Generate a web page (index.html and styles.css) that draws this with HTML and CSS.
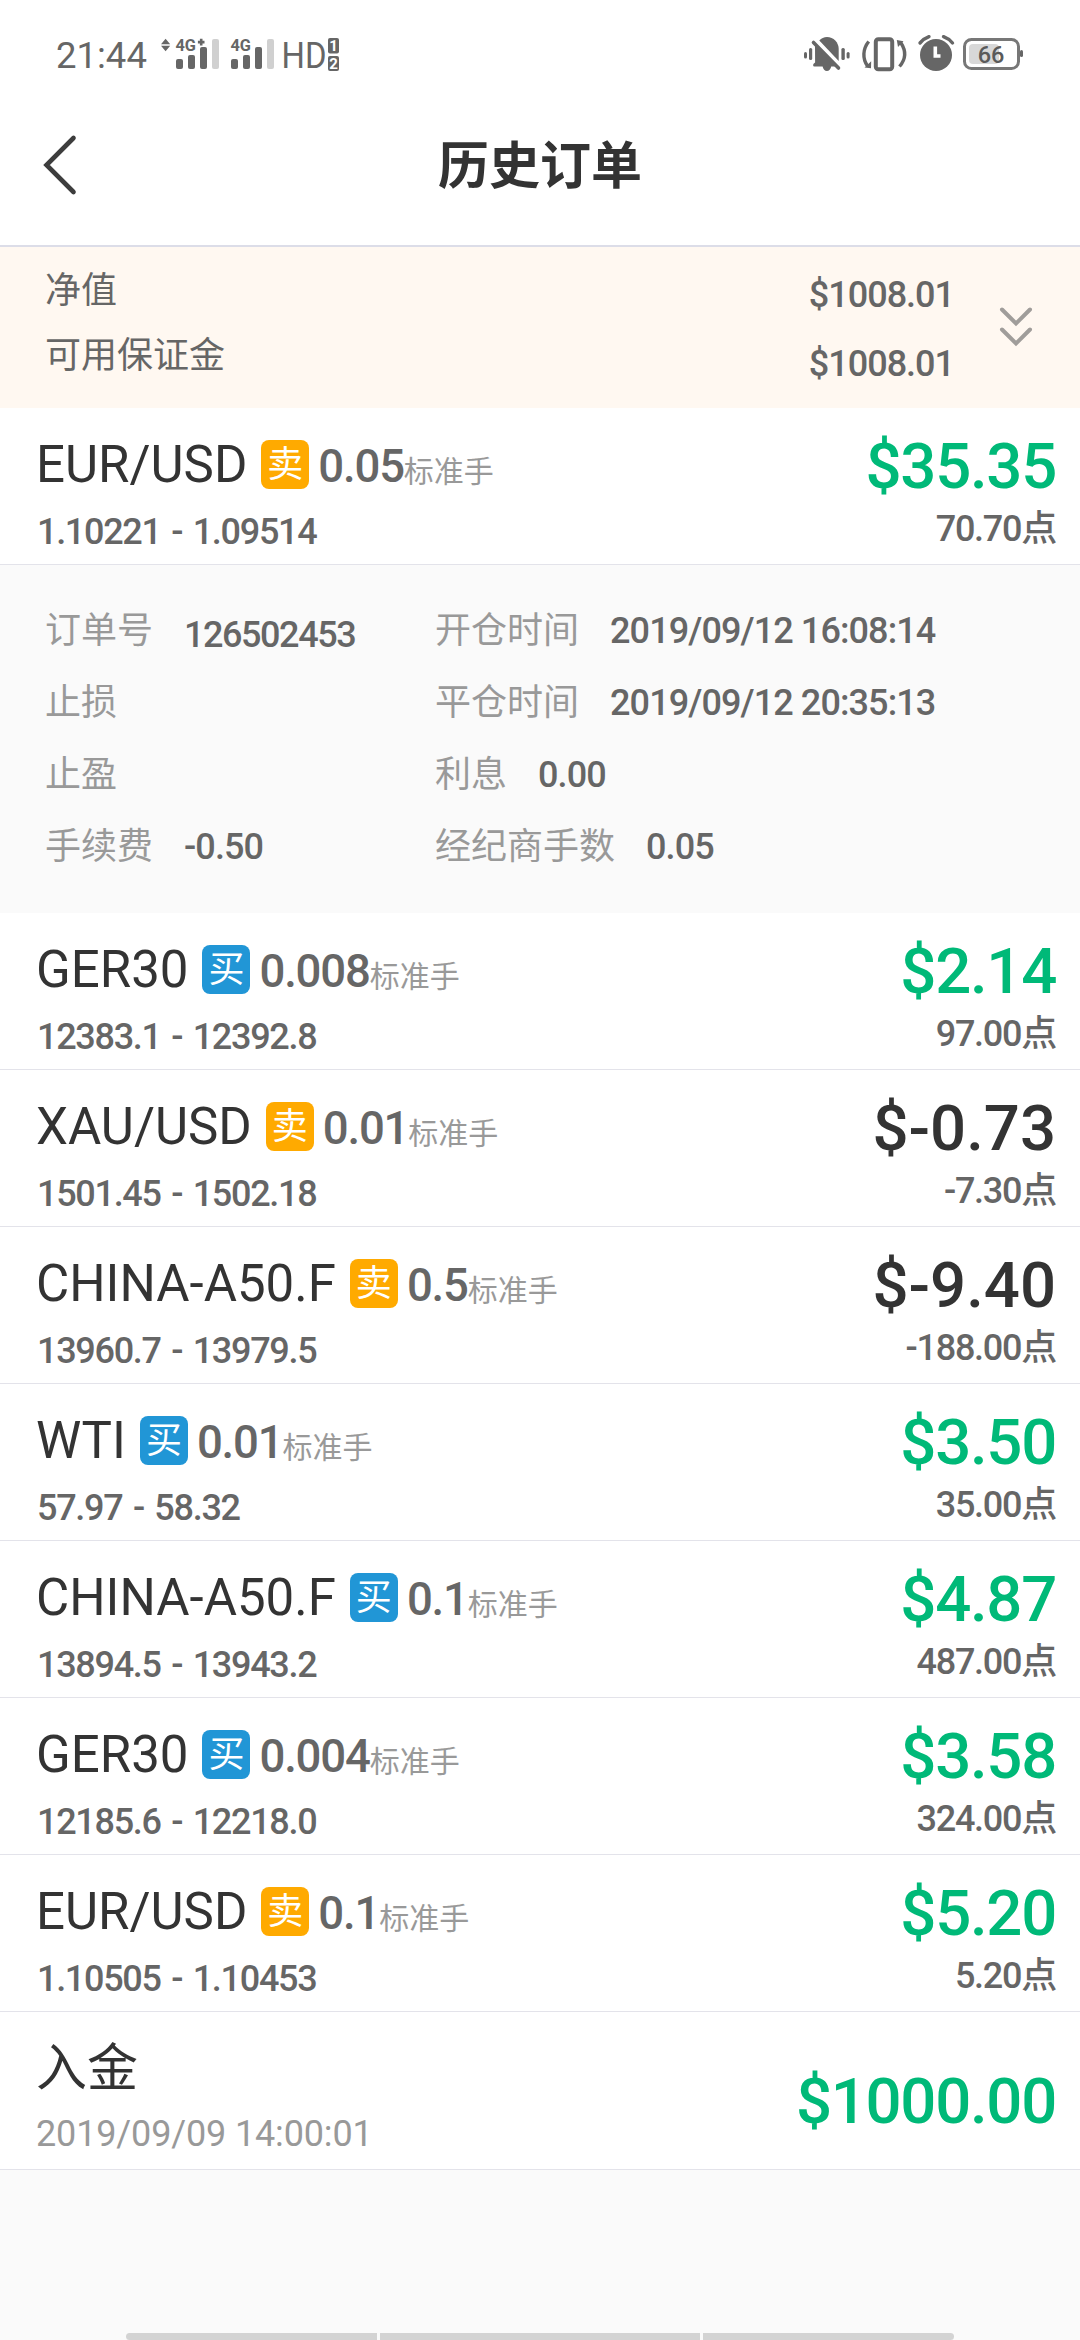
FILE: index.html
```html
<!DOCTYPE html>
<html lang="zh-CN">
<head>
<meta charset="utf-8">
<title>历史订单</title>
<link rel="stylesheet" href="styles.css">
</head>
<body>
<div class="screen">
  <header class="top">
    <div class="status">
      <span class="clock">21:44</span>
      <svg class="status-left" viewBox="156 30 190 50" width="190" height="50">
        <g fill="#666">
          <path d="M161 44.2l4.6-5.4 4.6 5.4zM161 45.8l4.6 5.4 4.6-5.4z"/>
          <path d="M199.9 38.800h2.600v2h2v2.800h-2v2h-2.600v-2h-2v-2.800h2z"/>
          <rect x="176" y="59" width="7" height="10" rx="2"/><rect x="188" y="55" width="7" height="14" rx="2"/><rect x="200" y="47" width="7" height="22" rx="2"/>
          <rect x="231" y="59" width="7" height="10" rx="2"/><rect x="243" y="55" width="7" height="14" rx="2"/><rect x="255" y="47" width="7" height="22" rx="2"/>
          <rect x="328" y="38" width="11" height="15.400" rx="2"/><rect x="328" y="56" width="11" height="15" rx="2"/>
          <text class="net" x="175.500" y="51" textLength="20.500" lengthAdjust="spacingAndGlyphs">4G</text>
          <text class="net" x="230.500" y="51" textLength="20.500" lengthAdjust="spacingAndGlyphs">4G</text>
          <text class="hd" x="281.500" y="67.500" textLength="45" lengthAdjust="spacingAndGlyphs">HD</text>
        </g>
        <rect x="212" y="39" width="7" height="30" rx="2" fill="#d0d0d0"/>
        <rect x="267" y="39" width="7" height="30" rx="2" fill="#d0d0d0"/>
        <text class="sim" x="333.500" y="50.500">1</text><text class="sim" x="333.500" y="68.500">2</text>
      </svg>
      <svg class="status-right" viewBox="800 30 228 50" width="228" height="50">
        <g fill="#666">
          <rect x="804" y="52" width="3" height="6.500" rx="1.500"/><rect x="809" y="48" width="3.200" height="12" rx="1.500"/>
          <rect x="841.400" y="48" width="3.400" height="12" rx="1.500"/><rect x="846.600" y="52" width="3" height="6.500" rx="1.500"/>
          <path d="M819.300 40.500c2-2.200 4.700-3.500 7.700-3.500 6.500 0 11.700 5.500 11.700 12v12z"/>
          <path d="M815 45l20.500 21.500h-4.300c-.5 2.700-2.200 4.500-4.300 4.500s-3.800-1.800-4.300-4.500h-8.200q-1.300 0-1.300-1.500t2-2.500z"/>
          <path d="M813.500 42.500l25 25.500" stroke="#666" stroke-width="3.600" stroke-linecap="round"/>
          <path d="M864.500 67.500l6.500.7.200-7zM896.800 40l6.700 1.200-5.500 5.800z"/>
          <circle cx="936" cy="55" r="16"/>
          <rect x="1020" y="50" width="3" height="7" rx="1.500"/>
        </g>
        <g fill="none" stroke="#666" stroke-width="3.400">
          <rect x="875.800" y="39.200" width="16.400" height="30" rx="2.500" stroke-width="4"/>
          <path d="M868.700 41.500c-6 7.500-6.400 17-1.200 24.500M901 43c5.200 8 4.600 16.500-1.500 23.500"/>
          <path d="M920 43q4-4.500 9-6.300M943.500 36.700q5.500 2 9 6.300" stroke-linecap="round"/>
        </g>
        <path d="M935.300 46.500v9.500h5.200" fill="none" stroke="#fff" stroke-width="3.600"/>
        <rect x="969" y="44" width="30" height="20" rx="4" fill="#d8d8d8"/>
        <rect x="964.500" y="39.500" width="54" height="29" rx="7" fill="none" stroke="#777" stroke-width="3"/>
        <text class="charge" x="991" y="62.700">66</text>
      </svg>
    </div>
    <div class="nav">
      <svg class="back" viewBox="0 0 36 62" width="36" height="62"><path d="M31.500 4L4.500 31l27 27" fill="none" stroke="#3d3d3d" stroke-width="4.600" stroke-linecap="round"/></svg>
      <h1 class="title">历史订单</h1>
    </div>
  </header>

  <section class="account">
    <div class="account-labels"><div>净值</div><div>可用保证金</div></div>
    <div class="account-values num"><div>$1008.01</div><div>$1008.01</div></div>
    <svg class="expand" viewBox="0 0 34 42" width="34" height="42"><path d="M3 4.500l14 14 14-14M3 24.500l14 14 14-14" fill="none" stroke="#a09d9a" stroke-width="4" stroke-linecap="round"/></svg>
  </section>

  <main>
    <article class="order">
      <div class="order-main">
        <div class="headline"><span class="symbol">EUR/USD</span><span class="side sell">卖</span><span class="lots num">0.05</span><span class="unit">标准手</span></div>
        <div class="prices num">1.10221 - 1.09514</div>
      </div>
      <div class="result"><div class="amount num gain">$35.35</div><div class="points num">70.70点</div></div>
    </article>
    <section class="details">
      <div class="field"><span class="label">订单号</span><span class="value num order-id">126502453</span></div>
      <div class="field"><span class="label">开仓时间</span><span class="value num">2019/09/12 16:08:14</span></div>
      <div class="field"><span class="label">止损</span></div>
      <div class="field"><span class="label">平仓时间</span><span class="value num">2019/09/12 20:35:13</span></div>
      <div class="field"><span class="label">止盈</span></div>
      <div class="field"><span class="label">利息</span><span class="value num">0.00</span></div>
      <div class="field"><span class="label">手续费</span><span class="value num">-0.50</span></div>
      <div class="field"><span class="label">经纪商手数</span><span class="value num">0.05</span></div>
    </section>
    <article class="order">
      <div class="order-main">
        <div class="headline"><span class="symbol">GER30</span><span class="side buy">买</span><span class="lots num">0.008</span><span class="unit">标准手</span></div>
        <div class="prices num">12383.1 - 12392.8</div>
      </div>
      <div class="result"><div class="amount num gain">$2.14</div><div class="points num">97.00点</div></div>
    </article>
    <article class="order">
      <div class="order-main">
        <div class="headline"><span class="symbol">XAU/USD</span><span class="side sell">卖</span><span class="lots num">0.01</span><span class="unit">标准手</span></div>
        <div class="prices num">1501.45 - 1502.18</div>
      </div>
      <div class="result"><div class="amount num loss">$-0.73</div><div class="points num">-7.30点</div></div>
    </article>
    <article class="order">
      <div class="order-main">
        <div class="headline"><span class="symbol">CHINA-A50.F</span><span class="side sell">卖</span><span class="lots num">0.5</span><span class="unit">标准手</span></div>
        <div class="prices num">13960.7 - 13979.5</div>
      </div>
      <div class="result"><div class="amount num loss">$-9.40</div><div class="points num">-188.00点</div></div>
    </article>
    <article class="order">
      <div class="order-main">
        <div class="headline"><span class="symbol">WTI</span><span class="side buy">买</span><span class="lots num">0.01</span><span class="unit">标准手</span></div>
        <div class="prices num">57.97 - 58.32</div>
      </div>
      <div class="result"><div class="amount num gain">$3.50</div><div class="points num">35.00点</div></div>
    </article>
    <article class="order">
      <div class="order-main">
        <div class="headline"><span class="symbol">CHINA-A50.F</span><span class="side buy">买</span><span class="lots num">0.1</span><span class="unit">标准手</span></div>
        <div class="prices num">13894.5 - 13943.2</div>
      </div>
      <div class="result"><div class="amount num gain">$4.87</div><div class="points num">487.00点</div></div>
    </article>
    <article class="order">
      <div class="order-main">
        <div class="headline"><span class="symbol">GER30</span><span class="side buy">买</span><span class="lots num">0.004</span><span class="unit">标准手</span></div>
        <div class="prices num">12185.6 - 12218.0</div>
      </div>
      <div class="result"><div class="amount num gain">$3.58</div><div class="points num">324.00点</div></div>
    </article>
    <article class="order">
      <div class="order-main">
        <div class="headline"><span class="symbol">EUR/USD</span><span class="side sell">卖</span><span class="lots num">0.1</span><span class="unit">标准手</span></div>
        <div class="prices num">1.10505 - 1.10453</div>
      </div>
      <div class="result"><div class="amount num gain">$5.20</div><div class="points num">5.20点</div></div>
    </article>
    <article class="order deposit">
      <div class="order-main">
        <div class="headline"><span class="symbol">入金</span></div>
        <div class="date">2019/09/09 14:00:01</div>
      </div>
      <div class="result"><div class="amount num gain">$1000.00</div></div>
    </article>
  </main>
  <footer class="gesture"><span></span><span></span><span></span></footer>
</div>
</body>
</html>
```
FILE: styles.css
```css
* { box-sizing: border-box; }

body {
  margin: 0;
  background: #fafafa;
  color: #333;
  font-family: Roboto, "Noto Sans CJK SC", sans-serif;
}

.screen {
  width: 1080px;
  height: 2340px;
  display: flex;
  flex-direction: column;
  overflow: hidden;
}

.num {
  font-weight: 500;
  letter-spacing: -0.025em;
  white-space: pre;
}

/* Status bar and title */
.top {
  height: 247px;
  background: #fff;
  border-bottom: 2px solid #dcdde8;
}

.status {
  height: 84px;
  padding: 30px 52px 0 56px;
  display: flex;
}

.clock {
  width: 100px;
  font-size: 36.5px;
  line-height: 52px;
  color: #666;
}

.status-right { margin-left: auto; }
.net { font-size: 17px; font-weight: 700; }
.hd { font-size: 36.5px; }
.sim { font-size: 15px; font-weight: 700; fill: #fff; text-anchor: middle; }
.charge { font-size: 23.5px; font-weight: 500; fill: #5a5a5a; text-anchor: middle; }

.nav {
  height: 161px;
  padding: 0 42px;
  display: grid;
  grid-template-columns: 36px 1fr 36px;
  align-items: center;
}

.title {
  margin: 4px 0 0;
  font-size: 51px;
  line-height: 60px;
  font-weight: 700;
  text-align: center;
}

/* Account summary */
.account {
  height: 161px;
  padding: 0 47px 0 45px;
  display: flex;
  background: #fff8f1;
  color: #666;
}

.account-labels {
  flex: 1;
  padding-top: 12px;
  font-size: 36px;
  line-height: 65px;
}

.account-values {
  padding-top: 14px;
  font-size: 36px;
  line-height: 69px;
  letter-spacing: -0.028em;
  text-align: right;
}

.expand { margin: 58px 0 0 45px; }

/* Order rows */
.order {
  height: 157px;
  padding: 0 24px 0 36px;
  display: flex;
  justify-content: space-between;
  background: #fff;
  border-bottom: 1px solid #e3e3ea;
}

.order-main { padding-top: 27px; }

.headline {
  height: 60px;
  display: flex;
  align-items: flex-start;
  line-height: 60px;
}

.symbol { font-size: 51px; }

.side {
  width: 48px;
  height: 49px;
  margin: 5px 9px 0 14px;
  border-radius: 8px;
  color: #fff;
  font-size: 36px;
  line-height: 51px;
  text-align: center;
}

.sell { background: #fa0; }
.buy { background: #2196d6; }

.lots {
  margin-top: 2px;
  font-size: 45.5px;
  letter-spacing: -0.026em;
  color: #666;
}

.unit {
  margin-top: 7px;
  font-size: 30px;
  color: #999;
}

.prices {
  margin-top: 13px;
  padding-left: 1px;
  font-size: 36px;
  line-height: 48px;
  letter-spacing: -0.036em;
  word-spacing: 0.08em;
  color: #666;
}

.result {
  padding-top: 21px;
  text-align: right;
}

.amount {
  font-size: 63.5px;
  line-height: 76px;
  letter-spacing: -0.02em;
}

.gain { color: #00b978; }
.loss { letter-spacing: 0; }

.points {
  font-size: 36px;
  line-height: 48px;
  letter-spacing: -0.035em;
  color: #666;
}

/* Expanded order */
.details {
  height: 348px;
  padding: 30px 45px 0;
  display: grid;
  grid-template-columns: 390px 1fr;
  grid-auto-rows: 72px;
}

.field {
  display: flex;
  gap: 31px;
  font-size: 36px;
  line-height: 72px;
}

.label { color: #999; }
.value { color: #666; }

.order-id {
  margin-top: 4px;
  letter-spacing: -0.04em;
}

/* Deposit */
.deposit { height: 158px; }
.deposit .result { padding-top: 52px; }

.date {
  margin-top: 11px;
  font-size: 36px;
  line-height: 48px;
  letter-spacing: -0.004em;
  color: #999;
}

/* System gesture hints */
.gesture {
  width: 828px;
  margin: auto auto 0;
  display: grid;
  grid-template-columns: 251px 320px 251px;
  column-gap: 3px;
}

.gesture span { height: 7px; background: #d3d3d3; }
.gesture span:first-child { border-radius: 4px 0 0 4px; }
.gesture span:last-child { border-radius: 0 4px 4px 0; }
```
